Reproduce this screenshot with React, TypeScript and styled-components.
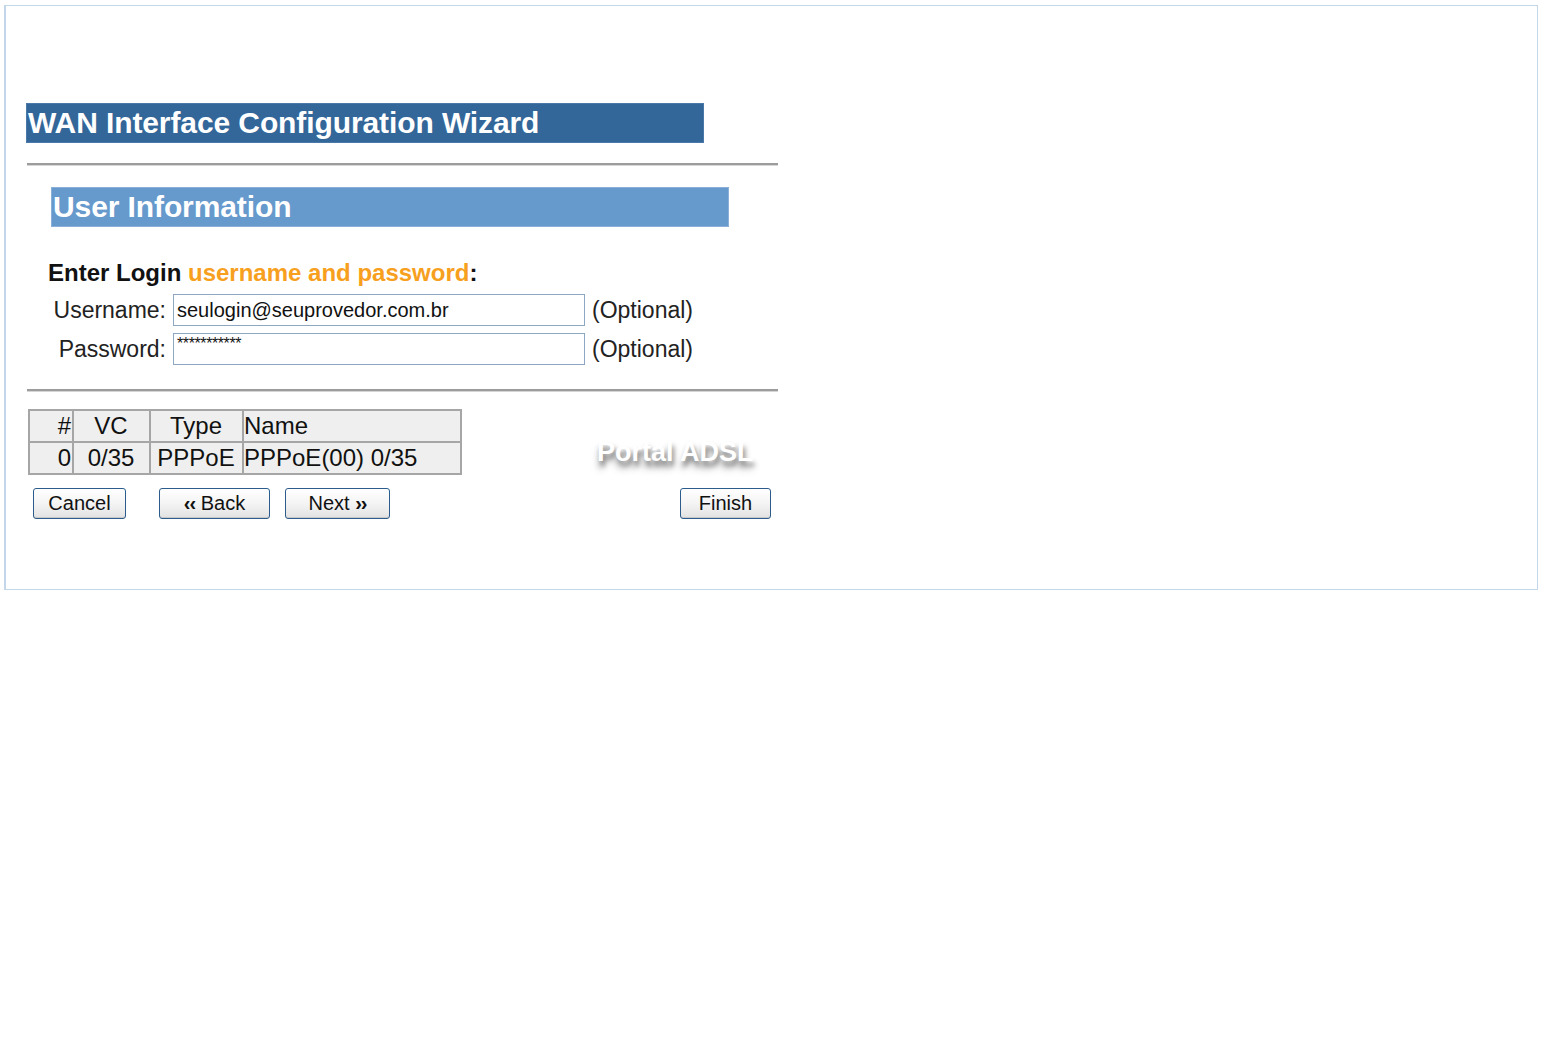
import React from "react";
import styled, { createGlobalStyle } from "styled-components";

const GlobalStyle = createGlobalStyle`
  html, body {
    margin: 0;
    padding: 0;
    background: #ffffff;
    font-family: "Liberation Sans", Arial, sans-serif;
  }
`;

const Frame = styled.div`
  box-sizing: border-box;
  margin: 5px 0 0 4px;
  width: 1534px;
  height: 585px;
  border: 1px solid #c4d7ea;
  border-left-width: 2px;
  padding: 97px 0 0 20px;
`;

const Content = styled.div`
  width: 752px;
  display: flex;
  flex-direction: column;
`;

const Banner = styled.div<{ $tone: "dark" | "light"; $indent?: number }>`
  box-sizing: border-box;
  width: 678px;
  height: 40px;
  margin-left: ${(p) => p.$indent ?? 0}px;
  padding-left: 1px;
  background: ${(p) => (p.$tone === "dark" ? "#336699" : "#6699cc")};
  border: 1px solid ${(p) => (p.$tone === "dark" ? "#4a78a8" : "#8ab0d8")};
  color: #ffffff;
  font-size: 30px;
  font-weight: bold;
  line-height: 38px;
  letter-spacing: -0.1px;
  white-space: nowrap;
`;

const Rule = styled.div<{ $top: number; $bottom: number }>`
  margin: ${(p) => p.$top}px 0 ${(p) => p.$bottom}px 1px;
  width: 751px;
  height: 0;
  border-top: 2px solid #9c9c9c;
  border-bottom: 1px solid #d6d6d6;
`;

const Prompt = styled.div`
  margin: 32px 0 0 22px;
  font-size: 24px;
  font-weight: bold;
  color: #111111;
  line-height: 28px;
  white-space: nowrap;
`;

const Accent = styled.span`
  color: #f7a020;
`;

const Form = styled.div`
  margin: 7px 0 0 22px;
  display: grid;
  grid-template-columns: 118px 412px auto;
  column-gap: 7px;
  row-gap: 7px;
  align-items: center;
`;

const Label = styled.label`
  text-align: right;
  font-size: 23px;
  color: #222222;
  white-space: nowrap;
`;

const Field = styled.input`
  box-sizing: border-box;
  width: 412px;
  height: 32px;
  margin: 0;
  padding: 0 3px;
  border: 1px solid #8ea8c4;
  font-family: "Liberation Sans", Arial, sans-serif;
  font-size: 20px;
  color: #111111;
  background: #ffffff;
  outline: none;
`;

const Mask = styled.div`
  box-sizing: border-box;
  width: 412px;
  height: 32px;
  padding: 3px 3px 0;
  border: 1px solid #8ea8c4;
  font-size: 16px;
  letter-spacing: -0.4px;
  line-height: 14px;
  color: #111111;
  overflow: hidden;
`;

const Hint = styled.span`
  font-size: 23px;
  color: #222222;
  white-space: nowrap;
`;

const TableArea = styled.div`
  position: relative;
  margin-left: 2px;
`;

const Grid = styled.table`
  border-collapse: separate;
  border-spacing: 2px;
  background: #a6a6a6;
  font-size: 24px;
  color: #111111;
`;

const Cell = styled.td<{ $align: "left" | "center" | "right"; $w: number }>`
  width: ${(p) => p.$w}px;
  height: 30px;
  padding: 0 1px 0 0;
  background: #efefef;
  text-align: ${(p) => p.$align};
  line-height: 30px;
  white-space: nowrap;
`;

const Watermark = styled.div`
  position: absolute;
  left: 569px;
  top: 28px;
  font-size: 27px;
  font-weight: bold;
  color: #ffffff;
  text-shadow: 2px 5px 5px rgba(90, 90, 90, 0.7), 0 8px 7px rgba(120, 120, 120, 0.45);
  white-space: nowrap;
  pointer-events: none;
`;

const Actions = styled.div`
  margin: 13px 0 0 7px;
  width: 738px;
  display: flex;
  align-items: center;
`;

const Button = styled.button<{ $w: number; $gap?: number; $push?: boolean }>`
  box-sizing: border-box;
  width: ${(p) => p.$w}px;
  height: 31px;
  margin-left: ${(p) => (p.$push ? "auto" : `${p.$gap ?? 0}px`)};
  padding: 0;
  border: 1px solid #2b5c8c;
  border-radius: 3px;
  background: linear-gradient(#ffffff 0%, #f4f4f4 50%, #e2e2e2 100%);
  box-shadow: inset 0 -1px 0 #c8c8c8;
  font-family: "Liberation Sans", Arial, sans-serif;
  font-size: 20px;
  color: #111111;
  cursor: pointer;
`;

const Chevrons = styled.b`
  font-weight: bold;
  letter-spacing: -1px;
`;

const columns = [
  { key: "#", w: 41, align: "right" as const },
  { key: "VC", w: 74, align: "center" as const },
  { key: "Type", w: 90, align: "center" as const },
  { key: "Name", w: 215, align: "left" as const },
];

const rows = [["0", "0/35", "PPPoE", "PPPoE(00) 0/35"]];

export default function App() {
  return (
    <>
      <GlobalStyle />
      <Frame>
        <Content>
          <Banner $tone="dark">WAN Interface Configuration Wizard</Banner>
          <Rule $top={20} $bottom={21} />
          <Banner $tone="light" $indent={25}>
            User Information
          </Banner>
          <Prompt>
            Enter Login <Accent>username and password</Accent>:
          </Prompt>
          <Form>
            <Label>Username:</Label>
            <Field defaultValue="seulogin@seuprovedor.com.br" />
            <Hint>(Optional)</Hint>
            <Label>Password:</Label>
            <Mask>***********</Mask>
            <Hint>(Optional)</Hint>
          </Form>
          <Rule $top={24} $bottom={17} />
          <TableArea>
            <Grid>
              <tbody>
                <tr>
                  {columns.map((c) => (
                    <Cell key={c.key} $align={c.align} $w={c.w}>
                      {c.key}
                    </Cell>
                  ))}
                </tr>
                {rows.map((r, i) => (
                  <tr key={i}>
                    {r.map((v, j) => (
                      <Cell key={j} $align={columns[j].align} $w={columns[j].w}>
                        {v}
                      </Cell>
                    ))}
                  </tr>
                ))}
              </tbody>
            </Grid>
            <Watermark>Portal ADSL</Watermark>
          </TableArea>
          <Actions>
            <Button $w={93}>Cancel</Button>
            <Button $w={111} $gap={33}>
              <Chevrons>‹‹</Chevrons> Back
            </Button>
            <Button $w={105} $gap={15}>
              Next <Chevrons>››</Chevrons>
            </Button>
            <Button $w={91} $push>
              Finish
            </Button>
          </Actions>
        </Content>
      </Frame>
    </>
  );
}
